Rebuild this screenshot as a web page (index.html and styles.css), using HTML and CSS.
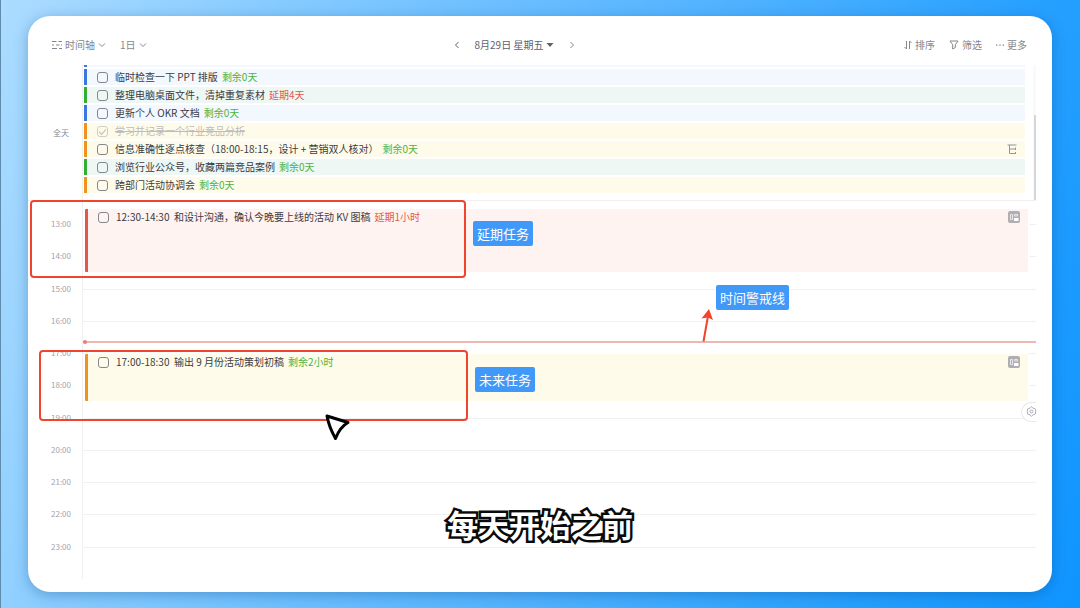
FILE: index.html
```html
<!DOCTYPE html>
<html lang="zh-CN">
<head>
<meta charset="utf-8">
<meta name="viewport" content="width=device-width, initial-scale=1">
<title>时间轴</title>
<link rel="stylesheet" href="styles.css">
</head>
<body>
<main class="card">
  <header class="toolbar">
    <div class="toolbar-group">
      <button class="tool" type="button">
        <svg class="icon-10" viewBox="0 0 10 10"><path d="M0 1.5h4.5M6.5 1.5H10M0 5h2M4 5h3.5M9 5h1M0 8.5h5M7 8.5h3"/></svg>
        时间轴
        <svg class="chevron" viewBox="0 0 8 8"><path d="M1 2.5 4 5.5 7 2.5"/></svg>
      </button>
      <button class="tool" type="button">1日
        <svg class="chevron" viewBox="0 0 8 8"><path d="M1 2.5 4 5.5 7 2.5"/></svg>
      </button>
    </div>
    <nav class="date-nav">
      <button class="tool dark" type="button" aria-label="前一天"><svg class="chevron" viewBox="0 0 8 8"><path d="M5.5 1 2.5 4 5.5 7"/></svg></button>
      <button class="tool dark" type="button">8月29日 星期五
        <svg class="chevron" viewBox="0 0 8 8"><path class="solid" d="M.5 2h7L4 6z"/></svg>
      </button>
      <button class="tool" type="button" aria-label="后一天"><svg class="chevron" viewBox="0 0 8 8"><path d="M2.5 1 5.5 4 2.5 7"/></svg></button>
    </nav>
    <div class="toolbar-group actions">
      <button class="tool" type="button">
        <svg class="chevron" viewBox="0 0 8 10"><path d="M2.5 1v8L.5 7M5.500 9V1l2 2"/></svg>
        排序</button>
      <button class="tool" type="button">
        <svg class="icon-10" viewBox="0 0 10 10"><path d="M1 1h8L6.300 4.800V7.500L3.700 9V4.800z"/></svg>
        筛选</button>
      <button class="tool" type="button">
        <svg class="chevron" viewBox="0 0 8 8"><path class="solid" d="M0 3.400h1.400v1.300H0zM3.300 3.400h1.400v1.300H3.300zM6.600 3.400H8v1.300H6.600z"/></svg>
        更多</button>
    </div>
  </header>

  <section class="all-day">
    <div class="all-day-label">全天</div>
    <ul class="task-list">
      <li class="task blue peek"></li>
      <li class="task blue"><label class="task-label"><input class="check" type="checkbox"><span>临时检查一下 PPT 排版</span></label><span class="left">剩余0天</span></li>
      <li class="task green"><label class="task-label"><input class="check" type="checkbox"><span>整理电脑桌面文件，清掉重复素材</span></label><span class="late">延期4天</span></li>
      <li class="task blue"><label class="task-label"><input class="check" type="checkbox"><span>更新个人 OKR 文档</span></label><span class="left">剩余0天</span></li>
      <li class="task orange done"><label class="task-label"><input class="check" type="checkbox" checked><span>学习并记录一个行业竞品分析</span></label></li>
      <li class="task orange"><label class="task-label"><input class="check" type="checkbox"><span>信息准确性逐点核查（18:00-18:15，设计 + 营销双人核对）</span></label><span class="left">剩余0天</span>
        <svg class="icon-10 task-icon" viewBox="0 0 10 10"><path d="M.5 1h9M2.500 1v8.500H8.500M2.500 5h6M8.500 3.500v2.500M8.500 8v2"/></svg></li>
      <li class="task green"><label class="task-label"><input class="check" type="checkbox"><span>浏览行业公众号，收藏两篇竞品案例</span></label><span class="left">剩余0天</span></li>
      <li class="task orange"><label class="task-label"><input class="check" type="checkbox"><span>跨部门活动协调会</span></label><span class="left">剩余0天</span></li>
    </ul>
    <div class="scrollbar"><div class="thumb"></div></div>
  </section>

  <section class="timeline">
    <div class="axis"></div>
    <time class="hour h13">13:00</time><div class="rule h13"></div>
    <time class="hour h14">14:00</time><div class="rule h14"></div>
    <time class="hour h15">15:00</time><div class="rule h15"></div>
    <time class="hour h16">16:00</time><div class="rule h16"></div>
    <time class="hour h17">17:00</time><div class="rule h17"></div>
    <time class="hour h18">18:00</time><div class="rule h18"></div>
    <time class="hour h19">19:00</time><div class="rule h19"></div>
    <time class="hour h20">20:00</time><div class="rule h20"></div>
    <time class="hour h21">21:00</time><div class="rule h21"></div>
    <time class="hour h22">22:00</time><div class="rule h22"></div>
    <time class="hour h23">23:00</time><div class="rule h23"></div>

    <article class="event overdue">
      <label class="task-label"><input class="check" type="checkbox"><span>12:30-14:30&nbsp; 和设计沟通，确认今晚要上线的活动 KV 图稿</span></label><span class="late">延期1小时</span>
      <svg class="board" viewBox="0 0 12 12"><rect class="board-fill" width="12" height="12" rx="2"/><path class="board-line" d="M2.500 3.500h2v5h-2zM6.500 3.500h3v1.500h-3z"/><path class="board-block" d="M6 7h4.500v3H6z"/></svg>
    </article>
    <article class="event upcoming">
      <label class="task-label"><input class="check" type="checkbox"><span>17:00-18:30&nbsp; 输出 9 月份活动策划初稿</span></label><span class="left">剩余2小时</span>
      <svg class="board" viewBox="0 0 12 12"><rect class="board-fill" width="12" height="12" rx="2"/><path class="board-line" d="M2.500 3.500h2v5h-2zM6.500 3.500h3v1.500h-3z"/><path class="board-block" d="M6 7h4.500v3H6z"/></svg>
    </article>
    <div class="now"></div>
    <button class="settings" type="button" aria-label="设置">
      <svg class="gear" viewBox="0 0 12 12"><path d="M6 .8 7.600 2.300 10.200 3.200 10.600 6 10.200 8.800 7.600 9.700 6 11.200 4.400 9.700 1.800 8.800 1.400 6 1.800 3.200 4.400 2.300z"/><circle cx="6" cy="6" r="1.600"/></svg>
    </button>
  </section>
</main>

<div class="marker marker-overdue"></div>
<div class="marker marker-upcoming"></div>
<div class="note note-overdue">延期任务</div>
<div class="note note-now">时间警戒线</div>
<div class="note note-upcoming">未来任务</div>
<svg class="arrow" viewBox="0 0 12 34"><path class="arrow-line" d="M2.500 32.500 7 7"/><path class="arrow-head" d="M8 0 12 11 7 8.500.5 9.500z"/></svg>
<svg class="cursor" viewBox="0 0 26 28"><path d="M3 3 24 9.500Q16 14 11.500 25.500 5 14 3 3z"/></svg>
<p class="caption">每天开始之前</p>
</body>
</html>
```

FILE: styles.css
```css
* { box-sizing: border-box; }

body {
  position: relative;
  margin: 0;
  min-height: 100vh;
  padding: 16px 28px;
  display: flex;
  overflow: hidden;
  background: linear-gradient(108deg, #acdcff 0%, #86cbff 22%, #54b4ff 55%, #26a0ff 82%, #0f95ff 100%);
  box-shadow: inset 1px 0 #5f8bad;
  color: #3b3b42;
  font: 10px/16px "Noto Sans CJK SC", "Noto Sans", sans-serif;
}

button {
  border: 0;
  padding: 0;
  background: none;
  font: inherit;
  color: inherit;
}

svg { display: block; fill: none; stroke: currentColor; stroke-width: 1; flex: none; }
.solid { fill: currentColor; stroke: none; }
.icon-10 { width: 10px; height: 10px; }
.chevron { width: 8px; height: 10px; }

.card {
  flex: 1;
  display: flex;
  flex-direction: column;
  padding: 0 16px 13px 0;
  border-radius: 22px;
  background: #fff;
  box-shadow: 0 3px 14px rgba(10, 70, 130, 0.35);
}

/* Toolbar */
.toolbar {
  display: grid;
  grid-template-columns: 8fr auto 9fr;
  align-items: center;
  min-height: 49px;
  padding: 8px 9px 0 24px;
  color: #85868f;
}
.toolbar-group { display: flex; gap: 14px; }
.actions { justify-content: flex-end; }
.tool { display: flex; align-items: center; gap: 3px; }
.date-nav { display: flex; gap: 14px; }
.dark { color: #5e616b; }

/* All-day tasks */
.all-day {
  display: grid;
  grid-template-columns: 54px 1fr 3px;
  border-bottom: 1px solid #f0f0f2;
}
.all-day-label {
  align-self: center;
  padding-right: 13px;
  text-align: right;
  font-size: 8px;
  color: #85868f;
}
.task-list {
  display: flex;
  flex-direction: column;
  gap: 2px;
  margin: 0;
  padding: 0 8px 7px 1px;
  border-left: 1px solid #f0f0f2;
  list-style: none;
}
.task {
  display: flex;
  align-items: center;
  gap: 4px;
  height: 16px;
  padding: 0 8px 0 10px;
  border-left: 3px solid;
}
.peek { height: 2px; }
.task-icon { margin-left: auto; color: #94949a; }
.blue { background: #f3f8fe; border-color: #3a78e0; }
.green { background: #eef7f4; border-color: #32ae32; }
.orange { background: #fffbea; border-color: #f0921e; }
.task-label { display: flex; align-items: center; gap: 7px; white-space: nowrap; }
.check {
  appearance: none;
  display: grid;
  place-items: center;
  flex: none;
  width: 11px;
  height: 11px;
  margin: 0;
  border: 1px solid #85858f;
  border-radius: 3px;
}
.done { color: #bdbcb8; text-decoration: line-through; }
.done .check { border-color: #cfcdc8; }
.check:checked::after {
  content: "";
  width: 6px;
  height: 3px;
  border: solid #bdbcb8;
  border-width: 0 0 1px 1px;
  transform: rotate(-45deg);
}
.left { color: #4db33d; white-space: nowrap; }
.late { color: #e0594b; white-space: nowrap; }
.scrollbar { display: flex; flex-direction: column; justify-content: flex-end; padding-left: 1px; background: #fafafa; }
.thumb { height: 63%; background: #d5d6da; }

/* Hour grid: one row per half hour, starting shortly before 12:30 */
.timeline {
  flex: 1;
  display: grid;
  grid-template-columns: 54px 1fr;
  grid-template-rows: 7px repeat(23, minmax(0, 1fr));
}
.axis { grid-area: 1 / 2 / -1 / 3; border-left: 1px solid #f0f0f2; }
.hour {
  grid-column: 1;
  align-self: center;
  padding-right: 11px;
  text-align: right;
  font-size: 8px;
  color: #a2a3aa;
}
.rule { grid-column: 2; border-top: 1px solid #f1f1f3; }
.hour.h13 { grid-row: 2 / span 2; }
.hour.h14 { grid-row: 4 / span 2; }
.hour.h15 { grid-row: 6 / span 2; }
.hour.h16 { grid-row: 8 / span 2; }
.hour.h17 { grid-row: 10 / span 2; }
.hour.h18 { grid-row: 12 / span 2; }
.hour.h19 { grid-row: 14 / span 2; }
.hour.h20 { grid-row: 16 / span 2; }
.hour.h21 { grid-row: 18 / span 2; }
.hour.h22 { grid-row: 20 / span 2; }
.hour.h23 { grid-row: 22 / span 2; }
.rule.h13 { grid-row: 3; }
.rule.h14 { grid-row: 5; }
.rule.h15 { grid-row: 7; }
.rule.h16 { grid-row: 9; }
.rule.h17 { grid-row: 11; }
.rule.h18 { grid-row: 13; }
.rule.h19 { grid-row: 15; }
.rule.h20 { grid-row: 17; }
.rule.h21 { grid-row: 19; }
.rule.h22 { grid-row: 21; }
.rule.h23 { grid-row: 23; }

.event {
  grid-column: 2;
  display: flex;
  align-items: flex-start;
  gap: 4px;
  margin: 1px 8px 1px 3px;
  padding: 0 8px 0 10px;
  border-left: 3px solid;
  border-radius: 1px;
  box-shadow: 0 0 0 1px #fff;
}
.overdue { grid-row: 2 / 6; background: #fef3f1; border-color: #e2574a; }
.upcoming { grid-row: 11 / 14; background: #fffbea; border-color: #f0921e; }
.event .check { margin-top: 1px; }
.board { width: 12px; height: 12px; margin: 2px 0 0 auto; stroke: none; }
.board-fill { fill: #b0aeb3; }
.board-line { stroke: #e9e7ea; }
.board-block { fill: #fff; }

.now {
  grid-area: 10 / 2;
  height: 2px;
  margin: 4px 0 0 1px;
  background: #ecb8b2;
}
.now::before {
  content: "";
  display: block;
  width: 4px;
  height: 4px;
  margin-top: -1px;
  border-radius: 50%;
  background: #ec7d75;
}
.settings {
  grid-area: 14 / 2 / 16 / 3;
  justify-self: end;
  display: flex;
  align-items: center;
  width: 15px;
  height: 20px;
  padding-left: 4px;
  border: 1px solid #e8e8eb;
  border-right: 0;
  border-radius: 10px 0 0 10px;
  background: #fff;
  color: #a6a7ae;
}
.gear { width: 11px; height: 11px; }

/* Annotations laid over the calendar */
.marker { position: absolute; border: 2px solid #f0452c; border-radius: 4px; }
.marker-overdue { left: 30px; top: 200px; width: 436px; height: 78px; }
.marker-upcoming { left: 39px; top: 350px; width: 429px; height: 71px; }
.note {
  position: absolute;
  padding: 0 4px;
  border-radius: 2px;
  background: #4098f8;
  color: #fff;
  font-size: 13px;
  line-height: 25px;
}
.note-overdue { left: 473px; top: 221px; }
.note-now { left: 716px; top: 285px; }
.note-upcoming { left: 475px; top: 367px; }
.arrow { position: absolute; left: 701px; top: 309px; width: 12px; height: 34px; }
.arrow-line { stroke: #f0452c; stroke-width: 2; }
.arrow-head { fill: #f0452c; stroke: none; }
.cursor { position: absolute; left: 324px; top: 413px; width: 26px; height: 28px; }
.cursor path { fill: #fff; stroke: #000; stroke-width: 3; stroke-linejoin: round; }
.caption {
  position: absolute;
  inset: auto 0 64px;
  margin: 0;
  text-align: center;
  font: bold 31px/40px "Noto Sans CJK SC", sans-serif;
  color: #fff;
  -webkit-text-stroke: 5px #0a0a0a;
  paint-order: stroke fill;
}
```
